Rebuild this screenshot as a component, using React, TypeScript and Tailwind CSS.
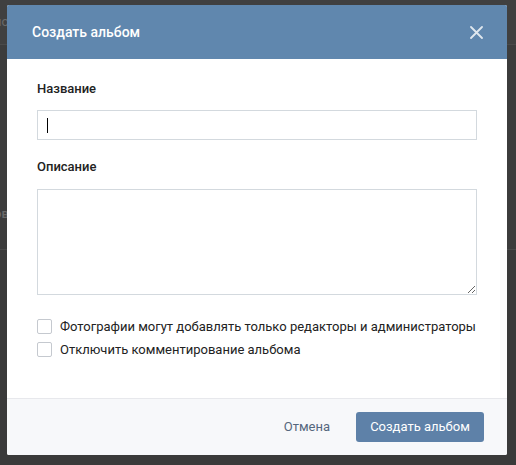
import { useState } from "react";

export default function App() {
  const [title, setTitle] = useState("");
  const [desc, setDesc] = useState("");
  const [onlyAdmins, setOnlyAdmins] = useState(false);
  const [noComments, setNoComments] = useState(false);

  return (
    <div
      className="relative h-[465px] w-[516px] overflow-hidden bg-[#3a3a3a]"
      style={{ fontFamily: "Roboto, 'Open Sans', Arial, sans-serif" }}
    >
      {/* page behind the overlay */}
      <div className="flex h-[45px] items-center border-b border-[#4a4a4a] bg-[#404040]">
        <span className="-ml-[6px] text-[13px] text-[#6a6a6a]">ло</span>
      </div>
      <div className="flex h-[205px] items-end border-b border-[#4a4a4a] bg-[#3c3c3c] pb-[26px]">
        <span className="-ml-[6px] text-[13px] font-medium text-[#6a6a6a]">ов</span>
      </div>

      {/* modal */}
      <div className="absolute left-[7px] top-[5px] flex h-[450px] w-[500px] flex-col overflow-hidden rounded-[2px] bg-white">
        <div className="flex h-[54px] shrink-0 items-center justify-between bg-[#6087ae] pl-[25px] pr-[24px]">
          <h2 className="text-[14px] font-medium text-white">Создать альбом</h2>
          <button className="flex h-[14px] w-[14px] items-center justify-center opacity-80">
            <svg width="13" height="13" viewBox="0 0 13 13" fill="none">
              <path d="M1 1 L12 12 M12 1 L1 12" stroke="#ffffff" strokeWidth="1.8" strokeLinecap="round" />
            </svg>
          </button>
        </div>

        <div className="flex flex-1 flex-col px-[30px] pt-[22px]">
          <label className="mb-[13px] text-[13px] font-medium leading-[16px] text-[#222]">Название</label>
          <div className="relative">
            <input
              autoFocus
              value={title}
              onChange={(e) => setTitle(e.target.value)}
              className="h-[30px] w-full border border-[#d3d9de] px-[9px] text-[13px] text-[#222] caret-transparent outline-none"
            />
            {title === "" && (
              <span className="pointer-events-none absolute left-[10px] top-[8px] h-[15px] w-[1px] bg-black" />
            )}
          </div>

          <label className="mb-[14px] mt-[19px] text-[13px] font-medium leading-[16px] text-[#222]">Описание</label>
          <textarea
            value={desc}
            onChange={(e) => setDesc(e.target.value)}
            className="h-[106px] w-full resize-y border border-[#d3d9de] px-[9px] py-[6px] text-[13px] text-[#222] outline-none"
          />

          <div className="mt-[24px] flex flex-col gap-[8px]">
            <label className="flex cursor-pointer items-center gap-[8px] text-[13px] leading-[15px] text-[#222]">
              <input
                type="checkbox"
                checked={onlyAdmins}
                onChange={(e) => setOnlyAdmins(e.target.checked)}
                className="sr-only"
              />
              <span className="h-[15px] w-[15px] shrink-0 rounded-[2px] border border-[#c5c9cf] bg-white" />
              Фотографии могут добавлять только редакторы и администраторы
            </label>
            <label className="flex cursor-pointer items-center gap-[8px] text-[13px] leading-[15px] text-[#222]">
              <input
                type="checkbox"
                checked={noComments}
                onChange={(e) => setNoComments(e.target.checked)}
                className="sr-only"
              />
              <span className="h-[15px] w-[15px] shrink-0 rounded-[2px] border border-[#c5c9cf] bg-white" />
              Отключить комментирование альбома
            </label>
          </div>
        </div>

        <div className="flex h-[57px] shrink-0 items-center justify-end gap-[10px] border-t border-[#e7e8ec] bg-[#f7f8fa] pr-[23px]">
          <button className="h-[30px] px-[16px] text-[13px] text-[#55677d]">Отмена</button>
          <button className="h-[30px] w-[128px] rounded-[3px] bg-[#5e81a8] text-[13px] text-white">Создать альбом</button>
        </div>
      </div>
    </div>
  );
}
